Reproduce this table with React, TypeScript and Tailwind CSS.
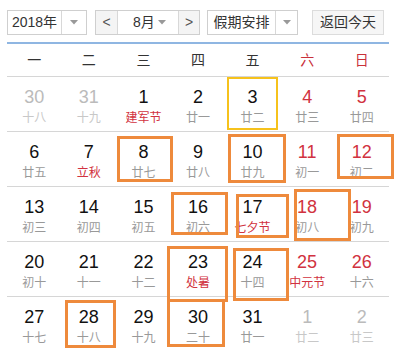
import React from 'react';

type Day = { d: number; l: string; other?: boolean; red?: boolean; fest?: boolean };

const rows: Day[][] = [
  [
    { d: 30, l: '十八', other: true },
    { d: 31, l: '十九', other: true },
    { d: 1, l: '建军节', fest: true },
    { d: 2, l: '廿一' },
    { d: 3, l: '廿二' },
    { d: 4, l: '廿三', red: true },
    { d: 5, l: '廿四', red: true },
  ],
  [
    { d: 6, l: '廿五' },
    { d: 7, l: '立秋', fest: true },
    { d: 8, l: '廿七' },
    { d: 9, l: '廿八' },
    { d: 10, l: '廿九' },
    { d: 11, l: '初一', red: true },
    { d: 12, l: '初二', red: true },
  ],
  [
    { d: 13, l: '初三' },
    { d: 14, l: '初四' },
    { d: 15, l: '初五' },
    { d: 16, l: '初六' },
    { d: 17, l: '七夕节', fest: true },
    { d: 18, l: '初八', red: true },
    { d: 19, l: '初九', red: true },
  ],
  [
    { d: 20, l: '初十' },
    { d: 21, l: '十一' },
    { d: 22, l: '十二' },
    { d: 23, l: '处暑', fest: true },
    { d: 24, l: '十四' },
    { d: 25, l: '中元节', red: true, fest: true },
    { d: 26, l: '十六', red: true },
  ],
  [
    { d: 27, l: '十七' },
    { d: 28, l: '十八' },
    { d: 29, l: '十九' },
    { d: 30, l: '二十' },
    { d: 31, l: '廿一' },
    { d: 1, l: '廿二', other: true },
    { d: 2, l: '廿三', other: true },
  ],
];

const weekdays = ['一', '二', '三', '四', '五', '六', '日'];

// hand-drawn highlight boxes over the calendar
const marks = [
  'left-[117px] top-[136px] w-[56px] h-[46px]',
  'left-[228px] top-[134px] w-[58px] h-[49px]',
  'left-[337px] top-[134px] w-[57px] h-[45px]',
  'left-[171px] top-[192px] w-[57px] h-[43px]',
  'left-[236px] top-[194px] w-[53px] h-[44px]',
  'left-[294px] top-[189px] w-[57px] h-[52px]',
  'left-[167px] top-[246px] w-[61px] h-[56px]',
  'left-[233px] top-[248px] w-[56px] h-[53px]',
  'left-[65px] top-[300px] w-[51px] h-[48px]',
  'left-[167px] top-[299px] w-[58px] h-[48px]',
];

const Caret = () => (
  <svg width="8" height="5" viewBox="0 0 8 5">
    <path d="M0 0 L8 0 L4 4.5 Z" fill="#999" />
  </svg>
);

export default function App() {
  return (
    <div className="relative w-[396px] h-[353px] bg-white overflow-hidden font-['Liberation_Sans','Noto_Sans_CJK_SC',sans-serif]">
      {/* Toolbar */}
      <div className="flex items-center h-[42px] px-[7px] pt-[2px] text-[14px] text-[#333]">
        <div className="flex h-[25px] w-[80px] border border-[#cfcfcf] bg-white">
          <div className="flex-1 flex items-center justify-center border-r border-[#d8d8d8]">2018年</div>
          <div className="w-[24px] flex items-center justify-center"><Caret /></div>
        </div>
        <div className="flex h-[25px] ml-[8px] w-[105px] border border-[#cfcfcf] bg-white">
          <div className="w-[22px] flex items-center justify-center bg-[#f4f4f4] border-r border-[#d8d8d8] text-[#555]">&lt;</div>
          <div className="flex-1 flex items-center pl-[15px]">8月</div>
          <div className="w-[20px] flex items-center justify-start"><Caret /></div>
          <div className="w-[21px] flex items-center justify-center bg-[#f4f4f4] border-l border-[#d8d8d8] text-[#555]">&gt;</div>
        </div>
        <div className="flex h-[25px] ml-[7px] w-[91px] border border-[#cfcfcf] bg-white">
          <div className="flex-1 flex items-center justify-center border-r border-[#d8d8d8]">假期安排</div>
          <div className="w-[21px] flex items-center justify-center"><Caret /></div>
        </div>
        <div className="flex h-[25px] ml-[14px] w-[72px] items-center justify-center border border-[#dcdcdc] bg-[#f6f6f6]">返回今天</div>
      </div>

      <div className="mx-[7px] h-[2px] bg-[#8fb6e2]" />

      {/* Weekdays */}
      <div className="grid grid-cols-7 mx-[7px] h-[33px] border-b border-[#d6d6d6] text-[14px] items-center text-center">
        {weekdays.map((w, i) => (
          <div key={w} className={i >= 5 ? 'text-[#c9303a]' : 'text-[#333]'}>{w}</div>
        ))}
      </div>

      {/* Days */}
      {rows.map((row, ri) => (
        <div
          key={ri}
          className={`grid grid-cols-7 mx-[7px] h-[55px] ${ri < rows.length - 1 ? 'border-b border-[#d6d6d6]' : ''}`}
        >
          {row.map((c, ci) => {
            const today = ri === 0 && c.d === 3;
            const numColor = c.other ? 'text-[#bbbbbb]' : c.red ? 'text-[#d13240]' : 'text-[#111]';
            const lunColor = c.other ? 'text-[#c8c8c8]' : c.fest ? 'text-[#d13240]' : 'text-[#999]';
            return (
              <div key={ci} className="relative flex flex-col items-center pt-[9px]">
                {today && <div className="absolute left-[2px] right-[2px] top-0 bottom-[1px] border-2 border-[#f6c21c]" />}
                <div className={`text-[18px] leading-[22px] ${numColor}`}>{c.d}</div>
                <div className={`text-[12px] leading-[17px] font-['Noto_Sans_CJK_SC',sans-serif] ${lunColor}`}>{c.l}</div>
              </div>
            );
          })}
        </div>
      ))}

      {marks.map((m, i) => (
        <div key={i} className={`absolute border-[3px] border-[#ee8a3c] pointer-events-none ${m}`} />
      ))}
    </div>
  );
}
